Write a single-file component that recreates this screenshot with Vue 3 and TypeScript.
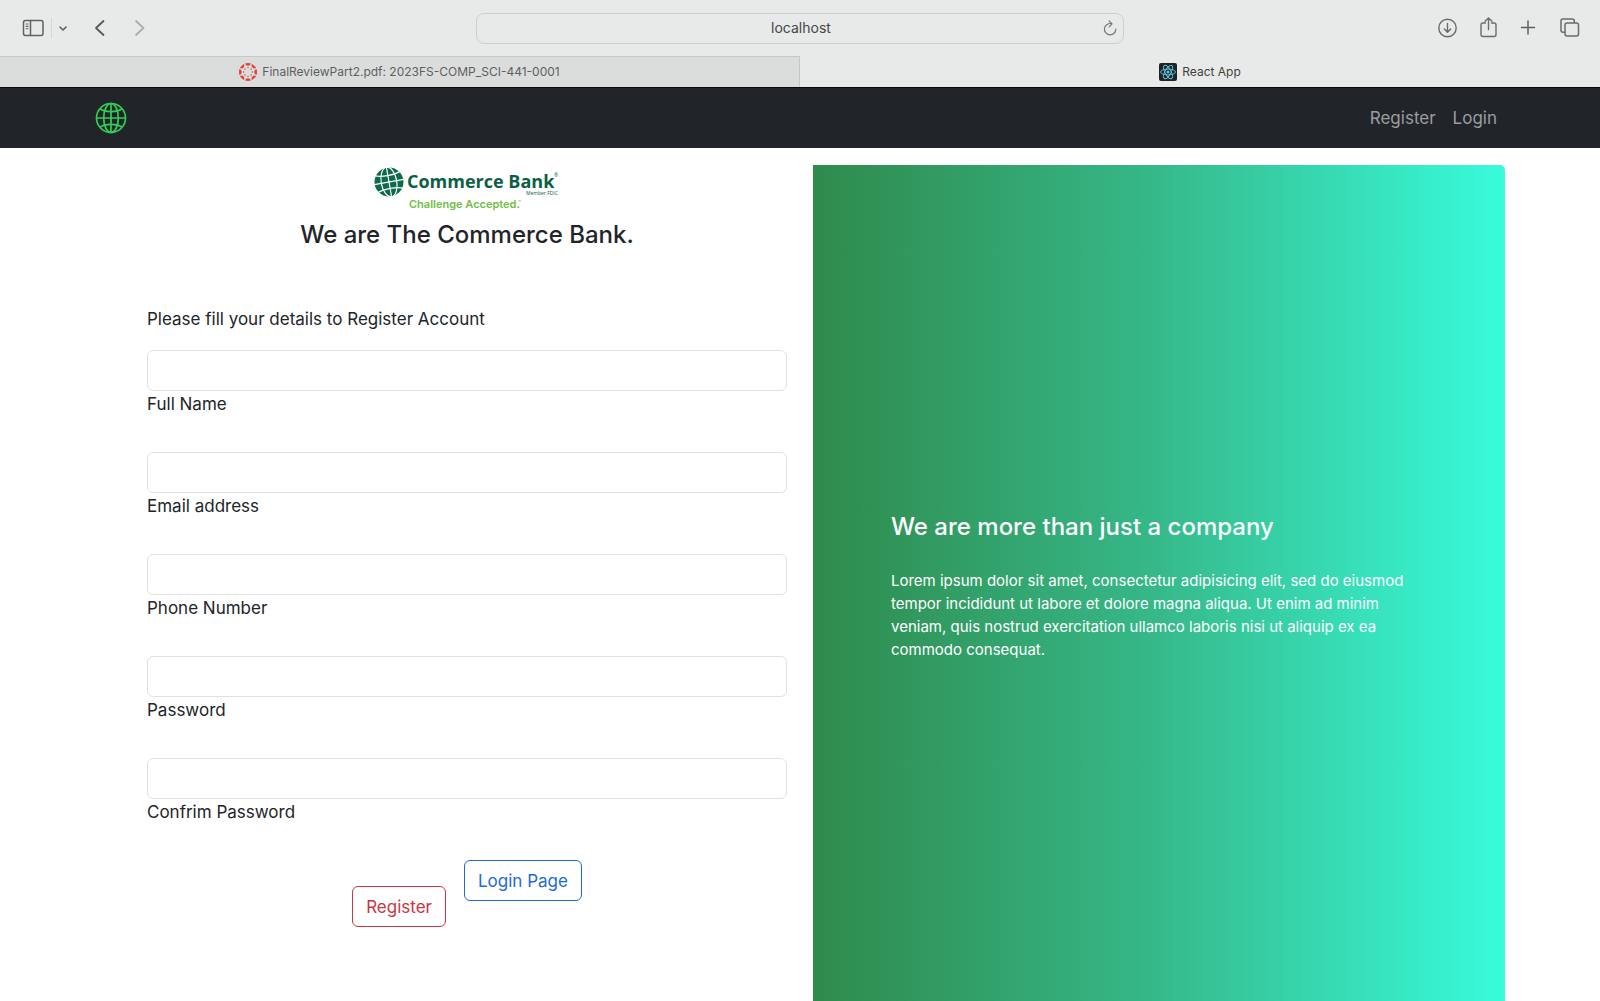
<script setup lang="ts">
import { reactive } from 'vue'

interface Field {
  id: string
  label: string
  type: string
}

const fields: Field[] = [
  { id: 'fullName', label: 'Full Name', type: 'text' },
  { id: 'email', label: 'Email address', type: 'email' },
  { id: 'phone', label: 'Phone Number', type: 'tel' },
  { id: 'password', label: 'Password', type: 'password' },
  { id: 'confirmPassword', label: 'Confrim Password', type: 'password' },
]

const values = reactive<Record<string, string>>({
  fullName: '',
  email: '',
  phone: '',
  password: '',
  confirmPassword: '',
})

const spokes: number[] = [0, 45, 90, 135, 180, 225, 270, 315]
</script>

<template>
  <div class="window">
    <header class="chrome">
      <div class="toolbar">
        <div class="tools tools-left">
          <button type="button" class="tool" aria-label="Sidebar">
            <svg width="22" height="18" viewBox="0 0 22 18" fill="none" stroke="#5f6160" stroke-width="1.5">
              <rect x="1.5" y="1.5" width="19.5" height="15" rx="2" />
              <path d="M8.5 1.5v15" />
              <path d="M3.8 5h2.6M3.8 7.4h2.6M3.8 9.8h2.6" stroke-width="1.1" />
            </svg>
          </button>
          <span class="divider"></span>
          <button type="button" class="tool" aria-label="Tab groups">
            <svg width="10" height="18" viewBox="0 0 10 18" fill="none" stroke="#5f6160" stroke-width="1.6" stroke-linecap="round" stroke-linejoin="round">
              <path d="M2 8l3 3 3-3" />
            </svg>
          </button>
          <button type="button" class="tool back" aria-label="Back">
            <svg width="12" height="18" viewBox="0 0 12 18" fill="none" stroke="#575958" stroke-width="1.8" stroke-linecap="round" stroke-linejoin="round">
              <path d="M9.5 2L2 9l7.5 7" />
            </svg>
          </button>
          <button type="button" class="tool forward" aria-label="Forward">
            <svg width="12" height="18" viewBox="0 0 12 18" fill="none" stroke="#acaeae" stroke-width="1.8" stroke-linecap="round" stroke-linejoin="round">
              <path d="M2 2l7.5 7L2 16" />
            </svg>
          </button>
        </div>

        <div class="address">
          <input type="text" aria-label="Address" value="localhost" />
          <button type="button" class="tool reload" aria-label="Reload">
            <svg width="14" height="18" viewBox="0 0 14 18" fill="none" stroke="#777978" stroke-width="1.2" stroke-linecap="round" stroke-linejoin="round">
              <path d="M8.6 4.700A5.700 5.700 0 1 0 12.800 10" />
              <path d="M6.200 1.800l2.800 3-2.800 3" />
            </svg>
          </button>
        </div>

        <div class="tools tools-right">
          <button type="button" class="tool" aria-label="Downloads">
            <svg width="20" height="22" viewBox="0 0 20 22" fill="none" stroke="#6a6c6b" stroke-width="1.4" stroke-linecap="round" stroke-linejoin="round">
              <circle cx="10.5" cy="11" r="8.7" />
              <path d="M10.5 6.5v8.500M7.300 12l3.200 3.200 3.200-3.200" />
            </svg>
          </button>
          <button type="button" class="tool" aria-label="Share">
            <svg width="20" height="22" viewBox="0 0 20 22" fill="none" stroke="#6a6c6b" stroke-width="1.4" stroke-linecap="round" stroke-linejoin="round">
              <path d="M7.5 6H5a2 2 0 0 0-2 2v9.500a2 2 0 0 0 2 2h11a2 2 0 0 0 2-2V8a2 2 0 0 0-2-2h-2.500" />
              <path d="M10.5 12.500V1.200M7 4.200l3.500-3.300L14 4.200" />
            </svg>
          </button>
          <button type="button" class="tool" aria-label="New tab">
            <svg width="20" height="22" viewBox="0 0 20 22" fill="none" stroke="#5f6160" stroke-width="1.5" stroke-linecap="round">
              <path d="M2.5 10.500h13M9 4v13" />
            </svg>
          </button>
          <button type="button" class="tool" aria-label="Tab overview">
            <svg width="20" height="22" viewBox="0 0 20 22" fill="none" stroke="#6a6c6b" stroke-width="1.5" stroke-linejoin="round">
              <path d="M5 15.300H3a2 2 0 0 1-2-2V4a2 2 0 0 1 2-2h9.300a2 2 0 0 1 2 2v2" />
              <rect x="5" y="6" width="13.5" height="13" rx="2" />
            </svg>
          </button>
        </div>
      </div>

      <nav class="tabs" aria-label="Open tabs">
        <a href="#" class="tab tab-idle">
          <svg width="18" height="18" viewBox="0 0 18 18">
            <g v-for="a in spokes" :key="a" :transform="`rotate(${a} 9 9)`">
              <path d="M6.1 0.500a9 9 0 0 1 5.800 0A3 3 0 0 1 6.100 0.500z" fill="#dc4338" />
              <circle cx="9" cy="4.600" r="0.700" fill="#dc4338" />
            </g>
          </svg>
          <span>FinalReviewPart2.pdf: 2023FS-COMP_SCI-441-0001</span>
        </a>
        <a href="#" class="tab">
          <svg width="18" height="18" viewBox="0 0 18 18">
            <rect width="18" height="18" rx="2" fill="#1f2327" />
            <g fill="none" stroke="#5fc4dc" stroke-width="0.9">
              <ellipse cx="9" cy="9" rx="7.5" ry="2.9" />
              <ellipse cx="9" cy="9" rx="7.5" ry="2.9" transform="rotate(60 9 9)" />
              <ellipse cx="9" cy="9" rx="7.5" ry="2.9" transform="rotate(120 9 9)" />
            </g>
            <circle cx="9" cy="9" r="1.5" fill="#5fc4dc" />
          </svg>
          <span>React App</span>
        </a>
      </nav>
    </header>

    <nav class="navbar">
      <div class="navbar-inner">
        <a href="#" class="brand" aria-label="Home">
          <svg width="32" height="32" viewBox="0 0 32 32" fill="none" stroke="#2fcf56" stroke-width="1.7">
            <circle cx="16" cy="16" r="14.5" />
            <ellipse cx="16" cy="16" rx="7.3" ry="14.5" />
            <path d="M16 1.500v29M1.500 16h29" />
            <path d="M5 6.800C8 9 12 9.600 16 9.600S24 9 27 6.800M5 25.200c3-2.200 7-2.800 11-2.800s8 .6 11 2.800" />
          </svg>
        </a>
        <div class="links">
          <a href="#">Register</a>
          <a href="#">Login</a>
        </div>
      </div>
    </nav>

    <main class="page">
      <section class="form-side">
        <div class="intro">
          <svg class="logo" width="196" height="54" viewBox="0 0 196 54" role="img" aria-label="Commerce Bank">
            <circle cx="20" cy="17" r="14.5" fill="#0c6b4a" />
            <g fill="none" stroke="#fff" stroke-width="1.2" transform="rotate(-10 20 17)">
              <ellipse cx="20" cy="17" rx="7.8" ry="15" />
              <path d="M20 1.500v31M5 17h30" />
              <path d="M7 8.500c7 2.600 19 2.600 26 0M7 25.500c7-2.600 19-2.600 26 0" />
            </g>
            <text x="38" y="23" class="logo-name">Commerce Bank</text>
            <text x="185" y="12" class="logo-tiny">®</text>
            <text x="157" y="30" class="logo-tiny">Member FDIC</text>
            <text x="40" y="43" class="logo-tag">Challenge Accepted.</text>
            <text x="149" y="38" class="logo-tm">™</text>
          </svg>
          <h1>We are The Commerce Bank.</h1>
        </div>

        <form @submit.prevent>
          <p>Please fill your details to Register Account</p>
          <div v-for="f in fields" :key="f.id" class="field">
            <input :id="f.id" v-model="values[f.id]" :type="f.type" />
            <label :for="f.id">{{ f.label }}</label>
          </div>
          <div class="actions">
            <button type="submit" class="btn btn-danger">Register</button>
            <button type="button" class="btn btn-primary">Login Page</button>
          </div>
        </form>
      </section>

      <section class="panel">
        <h2>We are more than just a company</h2>
        <p>
          Lorem ipsum dolor sit amet, consectetur adipisicing elit, sed do eiusmod tempor incididunt
          ut labore et dolore magna aliqua. Ut enim ad minim veniam, quis nostrud exercitation
          ullamco laboris nisi ut aliquip ex ea commodo consequat.
        </p>
      </section>
    </main>
  </div>
</template>

<style>
body {
  margin: 0;
  background: #fff;
}
</style>

<style scoped>
.window {
  display: flex;
  flex-direction: column;
  min-height: 100vh;
  font-family: Inter, "Liberation Sans", sans-serif;
  font-size: 17px;
  line-height: 26px;
  color: #212529;
}

.window *,
.window {
  box-sizing: border-box;
}

a {
  text-decoration: none;
  color: inherit;
}

/* Browser chrome */
.chrome {
  background: #e8eae9;
  border-bottom: 1px solid #08090b;
}

.toolbar {
  display: grid;
  grid-template-columns: 1fr 648px 1fr;
  align-items: center;
  height: 56px;
}

.tools {
  display: flex;
  align-items: center;
}

.tools-left {
  padding-left: 22px;
}

.tools-right {
  justify-content: flex-end;
  gap: 21px;
  padding-right: 20px;
}

.tool {
  display: flex;
  padding: 0;
  border: 0;
  background: none;
}

.divider {
  width: 1px;
  height: 20px;
  margin: 0 6px 0 7px;
  background: #d5d7d6;
}

.back {
  margin-left: 26px;
}

.forward {
  margin-left: 28px;
}

.address {
  display: flex;
  align-items: center;
  height: 31px;
  padding: 0 6px;
  border: 1px solid #cccfce;
  border-radius: 8px;
}

.address input {
  flex: 1;
  min-width: 0;
  padding: 0 0 0 16px;
  border: 0;
  background: none;
  font: inherit;
  font-size: 14px;
  text-align: center;
  color: #454746;
}

.tabs {
  display: grid;
  grid-template-columns: 1fr 1fr;
  height: 31px;
  font-size: 12px;
  line-height: 16px;
}

.tab {
  display: flex;
  align-items: center;
  justify-content: center;
  gap: 5px;
  border-top: 1px solid transparent;
  color: #3f4140;
}

.tab-idle {
  background: #dbdddc;
  border-top-color: #c6c8c7;
  border-right: 1px solid #c6c8c7;
  color: #5d5f5e;
}

/* Site navigation */
.navbar {
  background: #212529;
}

.navbar-inner {
  display: flex;
  align-items: center;
  justify-content: space-between;
  max-width: 1410px;
  height: 60px;
  margin: 0 auto;
  padding-right: 8px;
}

.brand {
  display: flex;
}

.links {
  display: flex;
  gap: 17px;
  color: #9b9d9f;
}

/* Page body */
.page {
  display: grid;
  grid-template-columns: 1fr 1fr;
  flex: 1;
  width: 100%;
  max-width: 1410px;
  margin: 0 auto;
  padding: 17px 0 0 26px;
}

.form-side {
  padding: 0 26px;
}

.intro {
  display: flex;
  flex-direction: column;
  align-items: center;
}

.logo {
  display: block;
}

.logo-name {
  font: 700 18px "Open Sans", sans-serif;
  fill: #0c5f45;
}

.logo-tag {
  font: 600 11px Inter, sans-serif;
  fill: #6fbf44;
}

.logo-tiny {
  font: 5px "Open Sans", sans-serif;
  fill: #0c5f45;
}

.logo-tm {
  font: 4px "Open Sans", sans-serif;
  fill: #6fbf44;
}

h1,
h2 {
  margin: 0;
  font-size: 24px;
  line-height: 32px;
  font-weight: 500;
}

form p {
  margin: 55px 0 18px;
}

.field {
  display: flex;
  flex-direction: column;
  margin-bottom: 34px;
}

.field input {
  width: 100%;
  height: 41px;
  padding: 6px 13px;
  border: 1px solid #dee2e6;
  border-radius: 6px;
  background: #fff;
  font: inherit;
}

.field label {
  line-height: 27px;
}

.actions {
  display: flex;
  justify-content: center;
  gap: 18px;
}

.btn {
  height: 41px;
  padding: 0 13px;
  border: 1px solid currentColor;
  border-radius: 6px;
  background: #fff;
  font: inherit;
}

.btn-danger {
  margin-top: 26px;
  color: #cb3444;
}

.btn-primary {
  color: #1d6adb;
}

.panel {
  display: flex;
  flex-direction: column;
  justify-content: center;
  padding: 6px 78px 0;
  border-top-right-radius: 5px;
  background: linear-gradient(to right, #2f8a4c, #36b98a 50%, #38fcdc);
  color: #fff;
}

.panel p {
  margin: 26px 0 0;
  font-size: 15px;
  line-height: 23px;
}
</style>
